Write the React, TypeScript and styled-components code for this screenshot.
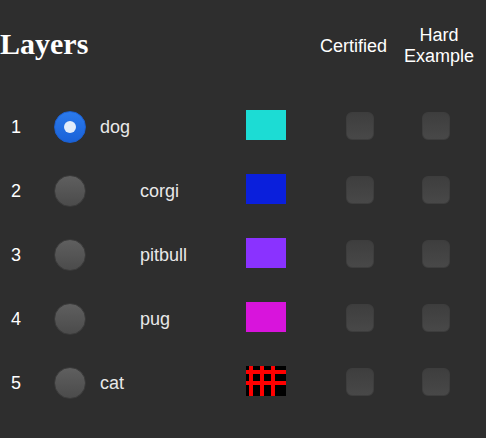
import React, { useState } from 'react';
import styled, { createGlobalStyle, css } from 'styled-components';

type Layer = {
  id: number;
  name: string;
  indent: boolean;
  color?: string;
  pattern?: boolean;
};

const layers: Layer[] = [
  { id: 1, name: 'dog', indent: false, color: '#1cdcd4' },
  { id: 2, name: 'corgi', indent: true, color: '#0a1fdc' },
  { id: 3, name: 'pitbull', indent: true, color: '#8a32ff' },
  { id: 4, name: 'pug', indent: true, color: '#d814dc' },
  { id: 5, name: 'cat', indent: false, pattern: true },
];

const GlobalStyle = createGlobalStyle`
  html, body {
    margin: 0;
    padding: 0;
    background: #2e2e2e;
  }
  body {
    font-family: "Liberation Sans", Arial, sans-serif;
    color: #fff;
  }
`;

const Panel = styled.div`
  width: 486px;
  height: 438px;
  background: #2e2e2e;
  overflow: hidden;
`;

const Header = styled.div`
  display: flex;
  align-items: center;
  height: 92px;
  padding-bottom: 3px;
  padding-right: 6px;
`;

const Title = styled.h2`
  margin: 0 0 4px 0;
  font-family: "Liberation Serif", "Times New Roman", serif;
  font-weight: bold;
  font-size: 30px;
  color: #fff;
  flex: 1;
`;

const ColumnTitle = styled.div<{ $width: number }>`
  width: ${(p) => p.$width}px;
  font-size: 18px;
  text-align: center;
  color: #fff;
`;

const Row = styled.div`
  display: grid;
  grid-template-columns: 43px 32px 160px 40px 60px 28px 48px 28px;
  align-items: center;
  height: 64px;
  padding-left: 11px;
`;

const Index = styled.div`
  font-size: 18px;
  color: #fff;
`;

const Radio = styled.input.attrs({ type: 'radio' })`
  appearance: none;
  margin: 0;
  width: 32px;
  height: 32px;
  border-radius: 50%;
  box-sizing: border-box;
  border: 1px solid #3a3a3a;
  background: linear-gradient(#5f5f5f, #4b4b4b);
  display: grid;
  place-items: center;

  &:checked {
    border-color: #1b5fcf;
    background: linear-gradient(#2b7aec, #1a62d8);
  }
  &:checked::after {
    content: '';
    width: 12px;
    height: 12px;
    border-radius: 50%;
    background: #e2ecfa;
  }
`;

const Label = styled.div<{ $indent: boolean }>`
  font-size: 18px;
  color: #e8e8e8;
  padding-left: ${(p) => (p.$indent ? 54 : 14)}px;
`;

const gridPattern = css`
  background-color: #000;
  background-image:
    linear-gradient(
      to right,
      transparent 0 3px, #f00 3px 7px,
      transparent 7px 14px, #f00 14px 18px,
      transparent 18px 25px, #f00 25px 29px,
      transparent 29px
    ),
    linear-gradient(
      to bottom,
      transparent 0 4px, #f00 4px 8px,
      transparent 8px 15px, #f00 15px 19px,
      transparent 19px
    );
`;

const Swatch = styled.div<{ $color?: string; $pattern?: boolean }>`
  width: 40px;
  height: 30px;
  margin-bottom: 4px;
  background: ${(p) => p.$color ?? 'transparent'};
  ${(p) => p.$pattern && gridPattern}
`;

const Check = styled.input.attrs({ type: 'checkbox' })`
  appearance: none;
  margin: 0 0 2px 0;
  width: 28px;
  height: 28px;
  box-sizing: border-box;
  border-radius: 6px;
  border: 1px solid #3d3d3d;
  background: linear-gradient(#3e3e3e, #484848);

  &:checked {
    background: linear-gradient(#2b7aec, #1a62d8);
  }
`;

export default function App() {
  const [active, setActive] = useState(1);

  return (
    <Panel>
      <GlobalStyle />
      <Header>
        <Title>Layers</Title>
        <ColumnTitle $width={89}>Certified</ColumnTitle>
        <ColumnTitle $width={82}>
          Hard
          <br />
          Example
        </ColumnTitle>
      </Header>
      {layers.map((layer) => (
        <Row key={layer.id}>
          <Index>{layer.id}</Index>
          <Radio
            name="layer"
            checked={active === layer.id}
            onChange={() => setActive(layer.id)}
          />
          <Label $indent={layer.indent}>{layer.name}</Label>
          <Swatch $color={layer.color} $pattern={layer.pattern} />
          <span />
          <Check />
          <span />
          <Check />
        </Row>
      ))}
    </Panel>
  );
}
